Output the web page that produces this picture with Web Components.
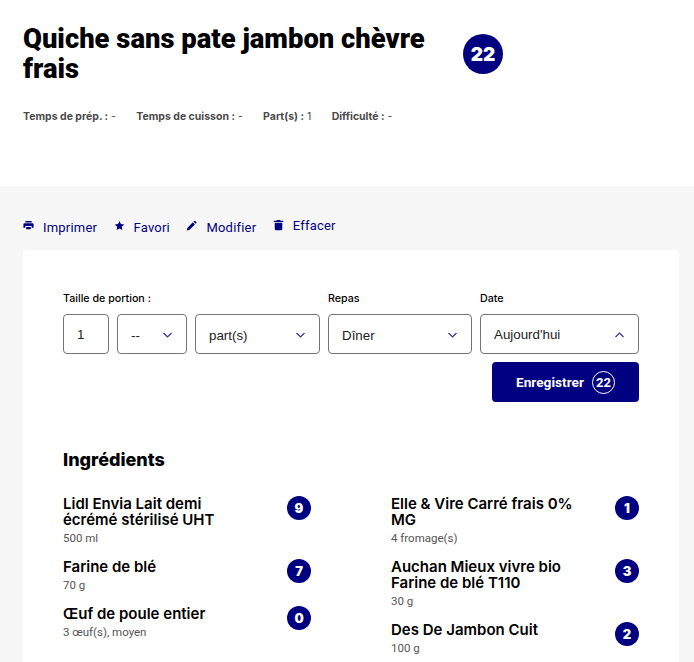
<!DOCTYPE html>
<html lang="fr">
<head>
<meta charset="utf-8">
<title>Quiche sans pate jambon chèvre frais</title>
<style>
  html, body { margin: 0; height: 662px; overflow: hidden; }
  body { background: #f7f7f7; font-family: "Inter", "Liberation Sans", sans-serif; color: #000; }
</style>
</head>
<body>
<recipe-page></recipe-page>

<script>
const ICONS = {
  print: '<path d="M3 0h8v2H3zM2 3h10a1.5 1.5 0 0 1 1.5 1.5V8.5H11V6.5H3v2H.5V4.5A1.5 1.5 0 0 1 2 3zM4 7.5h6v3H4z"/>',
  star: '<path transform="translate(0 -1)" d="M7 1l1.8 3.9 4.2.5-3.1 2.9.8 4.2L7 10.4 3.3 12.5l.8-4.2L1 5.4l4.2-.5z"/>',
  pencil: '<path transform="translate(0 -1)" d="M1 13l.6-3.2L8.7 2.7l2.6 2.6-7.1 7.1zM9.5 1.9l1-1a.9.9 0 0 1 1.3 0l1.3 1.3a.9.9 0 0 1 0 1.3l-1 1z"/>',
  trash: '<path transform="translate(0 -2)" d="M5 .8h4l.6.9H13v1.6H1V1.7h3.4zM2.2 4.2h9.6v8a1.5 1.5 0 0 1-1.5 1.5H3.7a1.5 1.5 0 0 1-1.5-1.5z"/>'
};

class ScoreBadge extends HTMLElement {
  constructor() {
    super();
    this.attachShadow({ mode: 'open' });
    this.shadowRoot.innerHTML = `
      <style>
        :host {
          display: flex;
          flex: none;
          width: var(--size, 24px);
          height: var(--size, 24px);
          border-radius: 50%;
          align-items: center;
          justify-content: center;
          background: #000080;
          color: #fff;
          font-weight: 900;
          font-size: var(--text, 13px);
        }
      </style>
      <slot></slot>
    `;
  }
}

class ActionLink extends HTMLElement {
  constructor() {
    super();
    this.attachShadow({ mode: 'open' });
    this.shadowRoot.innerHTML = `
      <style>
        :host {
          display: flex;
          align-items: flex-start;
          gap: 9px;
          color: #000080;
          font: 400 13px/16px Roboto, sans-serif;
          letter-spacing: .2px;
        }
        svg { width: 11px; height: 11px; fill: currentColor; margin-top: 3px; overflow: visible; }
        span { padding-top: var(--text-top, 2px); }
      </style>
      <svg viewBox="0 0 14 14">${ICONS[this.getAttribute('icon')]}</svg>
      <span><slot></slot></span>
    `;
  }
}

class FieldBox extends HTMLElement {
  constructor() {
    super();
    this.attachShadow({ mode: 'open' });
    const chevron = this.getAttribute('chevron');
    const arrow = chevron === 'up' ? 'M.5 5L4.5 1l4 4' : 'M.5 1l4 4 4-4';
    this.shadowRoot.innerHTML = `
      <style>
        :host {
          display: flex;
          box-sizing: border-box;
          height: 40px;
          align-items: center;
          justify-content: space-between;
          padding: 0 14px 0 13px;
          border: 1px solid #757575;
          border-radius: 4px;
          background: #fff;
          font: 400 13.33px "Liberation Sans", sans-serif;
          color: #222;
        }
        span { padding-top: var(--field-top, 2px); }
        svg { width: 9px; height: 6px; fill: none; stroke: #000080; stroke-width: 1.2; opacity: .8; margin: 2px 0 0 8px; }
      </style>
      <span><slot></slot></span>
      ${chevron ? `<svg viewBox="0 0 9 6"><path d="${arrow}"/></svg>` : ''}
    `;
  }
}

class IngredientRow extends HTMLElement {
  constructor() {
    super();
    this.attachShadow({ mode: 'open' });
    this.shadowRoot.innerHTML = `
      <style>
        :host {
          display: flex;
          justify-content: space-between;
          align-items: flex-start;
          margin-bottom: 13px;
        }
        .name { font-weight: 600; font-size: 15px; line-height: 16px; width: 190px; }
        .qty { margin-top: 2px; font: 400 11.5px/16px Roboto, sans-serif; color: #555; }
      </style>
      <div>
        <div class="name"><slot name="name"></slot></div>
        <div class="qty"><slot name="qty"></slot></div>
      </div>
      <score-badge>${this.getAttribute('score')}</score-badge>
    `;
  }
}

class RecipeHeader extends HTMLElement {
  constructor() {
    super();
    this.attachShadow({ mode: 'open' });
    this.shadowRoot.innerHTML = `
      <style>
        :host { display: block; box-sizing: border-box; height: 186px; padding: 24px 23px 0; background: #fff; }
        .top { display: flex; align-items: center; gap: 36px; }
        h1 { margin: 0; width: 404px; font: 900 27.4px/30px Roboto, sans-serif; }
        score-badge { --size: 40px; --text: 19px; }
        .meta { display: flex; gap: 20.4px; margin-top: 25px; font-size: 10.5px; line-height: 16px; color: #4a4a4a; }
        b { font-weight: 700; }
      </style>
      <div class="top">
        <h1>Quiche sans pate jambon chèvre frais</h1>
        <score-badge>22</score-badge>
      </div>
      <div class="meta">
        <span><b>Temps de prép. :</b> -</span>
        <span><b>Temps de cuisson :</b> -</span>
        <span><b>Part(s) :</b> 1</span>
        <span><b>Difficulté :</b> -</span>
      </div>
    `;
  }
}

class LogForm extends HTMLElement {
  constructor() {
    super();
    this.attachShadow({ mode: 'open' });
    this.shadowRoot.innerHTML = `
      <style>
        :host { display: block; }
        .row { display: flex; gap: 8px; }
        .group { display: flex; flex-direction: column; gap: 7px; }
        .inputs { display: flex; gap: 8px; }
        label { padding-top: 1px; font-size: 10.7px; line-height: 16px; font-weight: 500; }
        .save-row { display: flex; justify-content: flex-end; margin-top: 8px; }
        button {
          display: flex;
          align-items: center;
          justify-content: center;
          gap: 8px;
          width: 147px;
          height: 40px;
          padding: 0;
          border: 0;
          border-radius: 4px;
          background: #000080;
          color: #fff;
          font: 700 13.7px Roboto, sans-serif;
        }
        button span {
          display: flex;
          align-items: center;
          justify-content: center;
          width: 23px;
          height: 23px;
          border: 1px solid #fff;
          border-radius: 50%;
          box-sizing: border-box;
          font-size: 13px;
        }
      </style>
      <div class="row">
        <div class="group">
          <label>Taille de portion :</label>
          <div class="inputs">
            <field-box style="width:46px;--field-top:0">1</field-box>
            <field-box style="width:70px" chevron="down">--</field-box>
            <field-box style="width:125px" chevron="down">part(s)</field-box>
          </div>
        </div>
        <div class="group">
          <label>Repas</label>
          <field-box style="width:144px" chevron="down">Dîner</field-box>
        </div>
        <div class="group">
          <label>Date</label>
          <field-box style="width:159px;--field-top:0" chevron="up">Aujourd'hui</field-box>
        </div>
      </div>
      <div class="save-row"><button>Enregistrer <span>22</span></button></div>
    `;
  }
}

class RecipePage extends HTMLElement {
  constructor() {
    super();
    this.attachShadow({ mode: 'open' });
    this.shadowRoot.innerHTML = `
      <style>
        :host { display: block; }
        .actions { display: flex; gap: 16.5px; padding: 32px 23px 0; height: 32px; }
        .card { margin: 0 15px 0 23px; padding: 40px; background: #fff; border-radius: 4px; height: 600px; box-sizing: border-box; }
        h2 { margin: 47px 0 25px; font-size: 18px; line-height: 22px; font-weight: 800; }
        .cols { display: grid; grid-template-columns: 248px 248px; column-gap: 80px; }
      </style>
      <recipe-header></recipe-header>
      <div class="actions">
        <action-link icon="print">Imprimer</action-link>
        <action-link icon="star">Favori</action-link>
        <action-link icon="pencil">Modifier</action-link>
        <action-link icon="trash" style="--text-top:0">Effacer</action-link>
      </div>
      <div class="card">
        <log-form></log-form>
        <h2>Ingrédients</h2>
        <div class="cols">
          <div>
            <ingredient-row score="9"><span slot="name">Lidl Envia Lait demi écrémé stérilisé UHT</span><span slot="qty">500 ml</span></ingredient-row>
            <ingredient-row score="7"><span slot="name">Farine de blé</span><span slot="qty">70 g</span></ingredient-row>
            <ingredient-row score="0"><span slot="name">Œuf de poule entier</span><span slot="qty">3 œuf(s), moyen</span></ingredient-row>
          </div>
          <div>
            <ingredient-row score="1"><span slot="name">Elle &amp; Vire Carré frais 0% MG</span><span slot="qty">4 fromage(s)</span></ingredient-row>
            <ingredient-row score="3"><span slot="name">Auchan Mieux vivre bio Farine de blé T110</span><span slot="qty">30 g</span></ingredient-row>
            <ingredient-row score="2"><span slot="name">Des De Jambon Cuit</span><span slot="qty">100 g</span></ingredient-row>
          </div>
        </div>
      </div>
    `;
  }
}

customElements.define('score-badge', ScoreBadge);
customElements.define('action-link', ActionLink);
customElements.define('field-box', FieldBox);
customElements.define('ingredient-row', IngredientRow);
customElements.define('recipe-header', RecipeHeader);
customElements.define('log-form', LogForm);
customElements.define('recipe-page', RecipePage);
</script>
</body>
</html>
